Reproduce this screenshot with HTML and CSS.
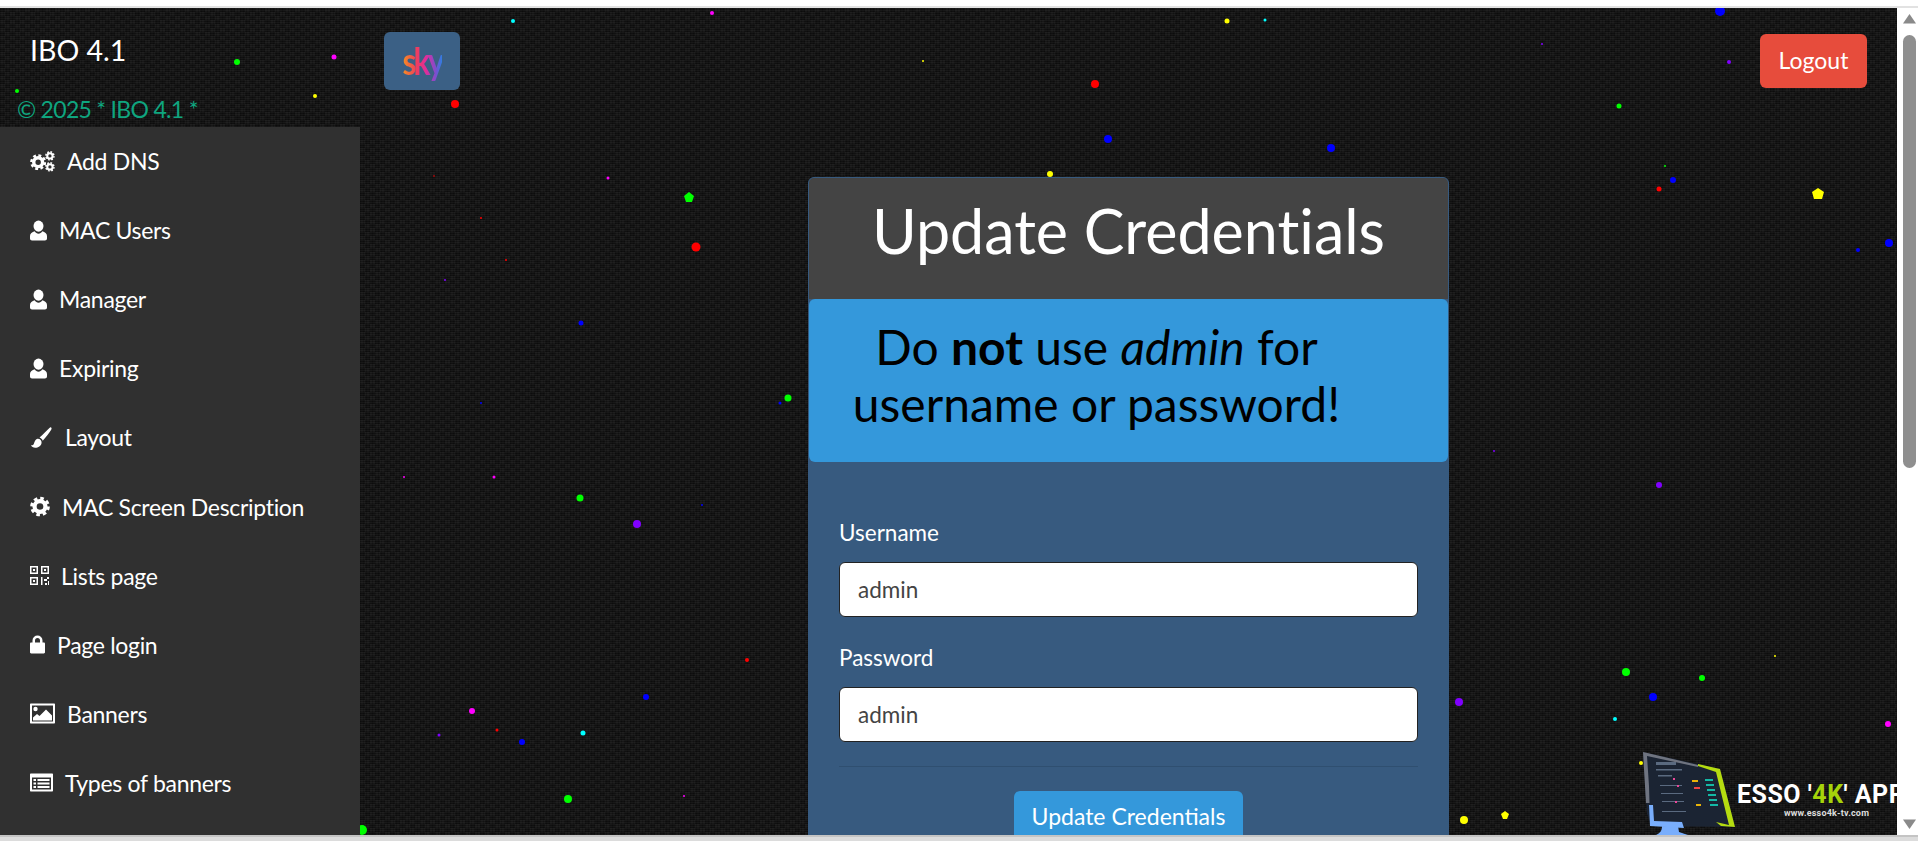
FILE: index.html
```html
<!DOCTYPE html>
<html lang="en">
<head>
<meta charset="utf-8">
<title>IBO 4.1</title>
<link rel="stylesheet" href="styles.css">
</head>
<body>
<svg class="defs" width="0" height="0" aria-hidden="true">
  <symbol id="i-gear" viewBox="0 0 24 24">
    <circle cx="12" cy="12" r="6.5" fill="none" stroke="#fff" stroke-width="5"/>
    <circle cx="12" cy="12" r="10" fill="none" stroke="#fff" stroke-width="3.6" stroke-dasharray="4.3 3.55"/>
  </symbol>
  <symbol id="i-cogs" viewBox="0 0 25 21">
    <g transform="translate(0 3) scale(.68)"><use href="#i-gear" width="24" height="24"/></g>
    <g transform="translate(15 0) scale(.41)"><use href="#i-gear" width="24" height="24"/></g>
    <g transform="translate(15 11) scale(.41)"><use href="#i-gear" width="24" height="24"/></g>
  </symbol>
  <symbol id="i-user" viewBox="0 0 17 20">
    <ellipse cx="8.5" cy="5.6" rx="5" ry="5.6" fill="#fff"/>
    <path d="M0 15.5c0-2.6 2.2-3.9 4.6-4.7 1 1.5 2.4 2.4 3.9 2.4s2.9-.9 3.9-2.4c2.4.8 4.6 2.1 4.6 4.7V18c0 1.2-.9 2-2 2H2c-1.100 0-2-.8-2-2z" fill="#fff"/>
  </symbol>
  <symbol id="i-brush" viewBox="0 0 24 24">
    <path d="M23 .6c.9.6.6 1.700-.1 2.900-2.200 3.700-5.900 8.500-9.500 12.100-.7-1.600-2-2.900-3.700-3.500C13.500 8.300 18.400 3.800 21.100 1c.7-.6 1.300-.8 1.900-.4z" fill="#fff"/>
    <path d="M7.500 13.300c2.700-.2 4.900 1.900 4.600 4.700-.4 3.700-3.900 5.700-7.200 5.700-2.400 0-4.300-1-4.900-2.800 1.600.3 2.700-.4 3.300-1.800.8-2.200 1.600-5.500 4.200-5.800z" fill="#fff"/>
  </symbol>
  <symbol id="i-qr" viewBox="0 0 19 19">
    <path fill="#fff" fill-rule="evenodd" d="M0 0h8v8H0zM1.500 1.500v5h5v-5zM11 0h8v8h-8zM12.500 1.500v5h5v-5zM0 11h8v8H0zM1.500 12.500v5h5v-5z"/>
    <rect x="3" y="3" width="2" height="2" fill="#fff"/><rect x="14" y="3" width="2" height="2" fill="#fff"/><rect x="3" y="14" width="2" height="2" fill="#fff"/>
    <path fill="#fff" d="M11 11h1.500v8H11zM14 13h3v2h-3zM17 11h2v2h-2zM15 17h2v2h-2zM18 15h1v4h-1z"/>
  </symbol>
  <symbol id="i-lock" viewBox="0 0 15 18">
    <path fill="#fff" fill-rule="evenodd" d="M2.500 7V5a5 5 0 0 1 10 0v2h1.300c.7 0 1.200.5 1.200 1.200v8.600c0 .7-.5 1.200-1.200 1.200H1.200C.5 18 0 17.500 0 16.800V8.200C0 7.500.5 7 1.200 7zM5 7h5V5a2.500 2.500 0 0 0-5 0z"/>
  </symbol>
  <symbol id="i-pic" viewBox="0 0 25 20">
    <path fill="#fff" fill-rule="evenodd" d="M1 0h23c.6 0 1 .4 1 1v18c0 .6-.4 1-1 1H1c-.6 0-1-.4-1-1V1c0-.6.4-1 1-1zM2 2v16h21V2z"/>
    <circle cx="5.500" cy="5.500" r="2.200" fill="#fff"/>
    <path fill="#fff" d="M3 17v-3l4-3.500 2.500 2L16 6l6 6v5z"/>
  </symbol>
  <symbol id="i-list" viewBox="0 0 23 18">
    <path fill="#fff" fill-rule="evenodd" d="M1 0h21c.6 0 1 .4 1 1v16c0 .6-.4 1-1 1H1c-.6 0-1-.4-1-1V1c0-.6.4-1 1-1zM2 4v12h19V4z"/>
    <path fill="#fff" d="M3.500 5.500h2.500v2H3.500zM7.500 5.500h12v2h-12zM3.500 9h2.500v2H3.500zM7.500 9h12v2h-12zM3.500 12.500h2.500v2H3.500zM7.500 12.500h12v2h-12z"/>
  </symbol>
</svg>

<div class="browser-top"></div>

<div class="window">
  <main class="page">
    <svg class="stars" viewBox="0 8 1897 827" aria-hidden="true">
      <g fill="#00ffff"><circle cx="513" cy="21" r="2"/><circle cx="1265" cy="20" r="1.500"/><circle cx="583" cy="733" r="2.500"/><circle cx="1615" cy="719" r="2"/></g>
      <g fill="#ff00ff"><circle cx="712" cy="13" r="2"/><circle cx="334" cy="57" r="2.500"/><circle cx="608" cy="178" r="1.500"/><circle cx="404" cy="477" r="1"/><circle cx="494" cy="477" r="1.500"/><circle cx="472" cy="711" r="3"/><circle cx="684" cy="796" r="1"/><circle cx="1888" cy="724" r="3"/></g>
      <g fill="#ffff00"><circle cx="1227" cy="21" r="2.500"/><circle cx="315" cy="96" r="2"/><circle cx="923" cy="61" r="1"/><circle cx="1050" cy="174" r="3"/><polygon points="1818,188 1824,192 1822,199 1814,199 1812,192"/><circle cx="1775" cy="656" r="1"/><polygon points="1505,811 1509,814 1507,819 1503,819 1501,814"/><circle cx="1464" cy="820" r="4"/><circle cx="1641" cy="763" r="2"/></g>
      <g fill="#0000ff"><circle cx="1720" cy="11" r="5"/><circle cx="1331" cy="148" r="4"/><circle cx="1108" cy="139" r="4"/><circle cx="1673" cy="180" r="3"/><circle cx="1858" cy="250" r="2"/><circle cx="1889" cy="243" r="4"/><circle cx="581" cy="323" r="2.500"/><circle cx="780" cy="403" r="1.500"/><circle cx="481" cy="403" r="1"/><circle cx="702" cy="505" r="1"/><circle cx="646" cy="697" r="3"/><circle cx="522" cy="742" r="3"/><circle cx="1653" cy="697" r="4"/></g>
      <g fill="#8000ff"><circle cx="1729" cy="62" r="2"/><circle cx="1542" cy="44" r="1"/><circle cx="445" cy="280" r="1"/><circle cx="637" cy="524" r="4"/><circle cx="1494" cy="451" r="1"/><circle cx="1659" cy="485" r="3"/><circle cx="439" cy="735" r="1.500"/><circle cx="1459" cy="702" r="4"/></g>
      <g fill="#00ff00"><circle cx="237" cy="62" r="3"/><circle cx="17" cy="91" r="2"/><circle cx="1619" cy="106" r="2.500"/><polygon points="689,192 694,196 692,202 686,202 684,196"/><circle cx="1665" cy="166" r="1"/><circle cx="788" cy="398" r="3.500"/><circle cx="580" cy="498" r="3.500"/><circle cx="568" cy="799" r="4"/><circle cx="362" cy="830" r="5"/><circle cx="1626" cy="672" r="4"/><circle cx="1702" cy="678" r="3"/></g>
      <g fill="#ff0000"><circle cx="455" cy="104" r="4"/><circle cx="434" cy="176" r=".8"/><circle cx="1095" cy="84" r="4"/><circle cx="1659" cy="189" r="2.500"/><circle cx="481" cy="218" r="1"/><circle cx="506" cy="260" r="1"/><circle cx="696" cy="247" r="4.500"/><circle cx="747" cy="660" r="2"/><circle cx="497" cy="730" r="1.500"/></g>
    </svg>

    <aside class="side">
      <div class="brand">IBO 4.1</div>
      <div class="copy">© 2025 * IBO 4.1 *</div>
      <nav class="menu">
        <a class="item"><svg class="ic w25"><use href="#i-cogs"/></svg>Add DNS</a>
        <a class="item"><svg class="ic w17"><use href="#i-user"/></svg>MAC Users</a>
        <a class="item"><svg class="ic w17"><use href="#i-user"/></svg>Manager</a>
        <a class="item"><svg class="ic w17"><use href="#i-user"/></svg>Expiring</a>
        <a class="item"><svg class="ic w23"><use href="#i-brush"/></svg>Layout</a>
        <a class="item"><svg class="ic w20"><use href="#i-gear"/></svg>MAC Screen Description</a>
        <a class="item"><svg class="ic w19"><use href="#i-qr"/></svg>Lists page</a>
        <a class="item"><svg class="ic w15"><use href="#i-lock"/></svg>Page login</a>
        <a class="item"><svg class="ic w25"><use href="#i-pic"/></svg>Banners</a>
        <a class="item"><svg class="ic w23"><use href="#i-list"/></svg>Types of banners</a>
      </nav>
    </aside>

    <section class="content">
      <header class="bar">
        <div class="logo"><span class="sky">sky</span></div>
        <a class="logout">Logout</a>
      </header>

      <div class="card">
        <h1 class="card-title">Update Credentials</h1>
        <div class="alert">Do <strong>not</strong> use <em>admin</em> for<br>username or password!</div>
        <form class="form">
          <label class="label" for="u">Username</label>
          <input class="input" id="u" type="text" value="admin">
          <label class="label second" for="p">Password</label>
          <input class="input" id="p" type="text" value="admin">
          <hr class="rule">
          <button class="submit" type="button">Update Credentials</button>
        </form>
      </div>
    </section>

    <svg class="mark" viewBox="1640 750 257 85" aria-hidden="true">
      <path d="M1662 826h16l1 6 9 3h-32c4-2 6-4 6-9z" fill="#79aefc"/>
      <path d="M1643 752l4 62 5 12 83 1-15-58z" fill="#1b2433"/>
      <path d="M1643 752l55 13 0 2-51-11 2 30 .5 17h-3.500z" fill="#6f7480"/>
      <path d="M1698 764l22 5 15 58-14-1-5-4 13 3-13-53-18-6z" fill="#b5dc10"/>
      <path d="M1649 805l1 21 34 2-2-6-28-1-1-16z" fill="#79aefc"/>
      <g fill="#5a6a80">
        <rect x="1656" y="762" width="20" height="3"/>
        <rect x="1656" y="769" width="26" height="1.500"/>
        <rect x="1658" y="775" width="14" height="1.500"/>
        <rect x="1660" y="785" width="22" height="1"/>
        <rect x="1661" y="793" width="22" height="1"/>
        <rect x="1662" y="801" width="22" height="1"/>
        <rect x="1662" y="811" width="24" height="1"/>
      </g>
      <g fill="#ec4899"><rect x="1673" y="778" width="2" height="2"/><rect x="1677" y="785" width="2" height="2"/><rect x="1675" y="801" width="2" height="2"/></g>
      <g fill="#eab308"><rect x="1692" y="780" width="6" height="2"/><rect x="1696" y="804" width="5" height="2"/></g>
      <g fill="#ef4444"><rect x="1694" y="787" width="6" height="2"/></g>
      <g fill="#14b8a6"><rect x="1705" y="779" width="8" height="2"/><rect x="1706" y="784" width="8" height="2"/><rect x="1707" y="789" width="8" height="2"/><rect x="1708" y="794" width="8" height="2"/><rect x="1709" y="799" width="8" height="2"/><rect x="1710" y="804" width="8" height="2"/></g>
      <text class="mark-title" x="1737" y="803">ESSO '<tspan class="mark-4k">4K</tspan>' APPS</text>
      <text class="mark-url" x="1784" y="816">www.esso4k-tv.com</text>
    </svg>
  </main>

  <div class="vscroll">
    <svg class="arrow" viewBox="0 0 13 11"><path d="M6.500 1L13 10.500H0z" fill="#8a8a8a"/></svg>
    <div class="thumb"></div>
    <svg class="arrow" viewBox="0 0 13 11"><path d="M6.500 10L0 .5h13z" fill="#8a8a8a"/></svg>
  </div>
</div>

<div class="hscroll"></div>
</body>
</html>
```

FILE: styles.css
```css
* { box-sizing: border-box; }

html, body {
  margin: 0;
  height: 841px;
  overflow: hidden;
}

body {
  display: flex;
  flex-direction: column;
  font-family: Lato, "Noto Sans", sans-serif;
  font-variant-ligatures: none;
  color: #fff;
  background: #fff;
}

.defs { position: absolute; }

.browser-top {
  flex: 0 0 8px;
  background: #fff;
  border-bottom: 2px solid #e2e2e2;
}

.window {
  flex: 1;
  display: flex;
  min-height: 0;
}

.page {
  position: relative;
  flex: 1;
  display: flex;
  overflow: hidden;
  background-color: #101010;
  background-image:
    repeating-linear-gradient(0deg, rgba(255,255,255,.035) 0 1px, transparent 1px 2px),
    repeating-linear-gradient(90deg, rgba(0,0,0,.25) 0 1px, transparent 1px 3px),
    conic-gradient(rgba(255,255,255,.03) 25%, transparent 0 50%, rgba(255,255,255,.03) 0 75%, transparent 0);
  background-size: auto, auto, 10px 8px;
}

.stars {
  position: absolute;
  inset: 0;
  width: 100%;
  height: 100%;
}

.side {
  position: relative;
  flex: 0 0 360px;
  display: flex;
  flex-direction: column;
}

.brand {
  padding: 24px 0 0 30px;
  font-size: 28.500px;
  line-height: 36px;
}

.copy {
  padding: 27px 0 0 17px;
  font-size: 23px;
  letter-spacing: -.7px;
  line-height: 28px;
  color: #0fa57f;
}

.menu {
  flex: 1;
  margin-top: 4px;
  padding-top: 1px;
  background: #303030;
}

.item {
  display: flex;
  align-items: center;
  gap: 12px;
  height: 69.100px;
  padding-left: 30px;
  font-size: 23px;
  letter-spacing: -.3px;
  color: #fff;
}

.item:first-child { margin-top: -1.500px; }

.ic { height: 21px; flex: none; }
.w15 { width: 15px; }
.w17 { width: 17px; }
.w19 { width: 19px; }
.w20 { width: 20px; }
.w23 { width: 23px; }
.w25 { width: 25px; }

.content {
  position: relative;
  flex: 1;
  display: flex;
  flex-direction: column;
  align-items: center;
}

.bar {
  align-self: stretch;
  display: flex;
  justify-content: space-between;
  align-items: flex-start;
  padding: 24px 30px 0 24px;
  margin-bottom: 87px;
}

.logo {
  width: 76px;
  height: 58px;
  display: flex;
  align-items: center;
  justify-content: center;
  background: #3b6085;
  border-radius: 6px;
}

.sky {
  display: inline-block;
  font-size: 32px;
  font-weight: 700;
  line-height: 36px;
  letter-spacing: -3px;
  background: linear-gradient(90deg, #f7941d 0%, #ef3f5a 35%, #e22d9b 60%, #7a4fd0 85%, #2f7fe0 100%);
  -webkit-background-clip: text;
  background-clip: text;
  color: transparent;
  transform: scaleY(1.2);
  filter: blur(.4px);
}

.logout {
  margin-top: 2px;
  padding: 0 0 3px;
  width: 107px;
  height: 54px;
  display: flex;
  align-items: center;
  justify-content: center;
  background: #e74c3c;
  border-radius: 6px;
  font-size: 23px;
  color: #fff;
}

.card {
  flex: none;
  width: 641px;
  background: #375a7f;
  border: 1px solid #375a7f;
  border-radius: 6px;
  padding-bottom: 40px;
}

.card-title {
  margin: 0;
  height: 121px;
  background: #444;
  border-radius: 5px 5px 0 0;
  text-align: center;
  font-size: 61px;
  font-weight: 400;
  line-height: 105px;
}

.alert {
  height: 163px;
  padding: 19px 104px 0 40px;
  background: #3498db;
  border-radius: 6px;
  text-align: center;
  font-size: 48px;
  line-height: 57px;
  color: #000;
}

.form {
  display: flex;
  flex-direction: column;
  padding: 56px 30px 0;
}

.label {
  font-size: 22.500px;
  line-height: 30px;
  margin-bottom: 14px;
}

.second { margin-top: 26px; }

.input {
  height: 55px;
  padding: 0 18px;
  border: 1px solid #222;
  border-radius: 6px;
  background: #fff;
  color: #444;
  font: 22.500px Lato, "Noto Sans", sans-serif;
}

.rule {
  width: 100%;
  margin: 24px 0 24px;
  border: 0;
  border-top: 1px solid #2f4f70;
}

.submit {
  align-self: center;
  height: 55px;
  width: 229px;
  padding: 0 0 5px;
  border: 0;
  border-radius: 6px;
  background: #3498db;
  color: #fff;
  font: 23px Lato, "Noto Sans", sans-serif;
}

.mark {
  position: absolute;
  right: 0;
  bottom: 0;
  width: 257px;
  height: 85px;
}

.mark-title {
  font: 700 25px Roboto, sans-serif;
  letter-spacing: .5px;
  fill: #fff;
}

.mark-4k { fill: #a6d40a; }

.mark-url {
  font: 700 9px Roboto, sans-serif;
  letter-spacing: .2px;
  fill: #ddd;
}

.vscroll {
  flex: 0 0 21px;
  display: flex;
  flex-direction: column;
  align-items: center;
  background: #fff;
  padding: 5px 2px 5px 5px;
}

.arrow { width: 13px; height: 11px; flex: none; }

.thumb {
  flex: none;
  width: 13px;
  height: 433px;
  margin: 11px 0 auto;
  background: #8f8f8f;
  border-radius: 7px;
}

.hscroll {
  flex: 0 0 6px;
  background: #dcdcdc;
  border-top: 2px solid #c4c4c4;
}
```
